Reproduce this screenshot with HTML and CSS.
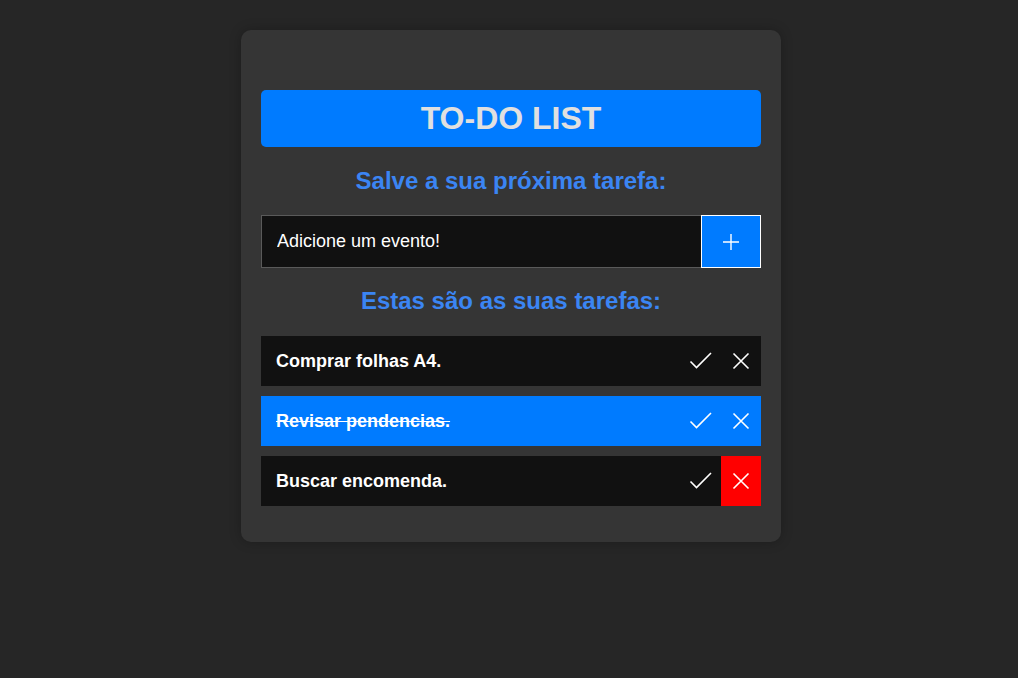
FILE: index.html
```html
<!DOCTYPE html>
<html lang="pt">
<head>
<meta charset="utf-8">
<title>To-Do List</title>
<link rel="stylesheet" href="styles.css">
</head>
<body>
<main class="card">
  <h1 class="title">TO-DO LIST</h1>
  <h2 class="subtitle">Salve a sua próxima tarefa:</h2>
  <form class="add-row">
    <input class="add-input" type="text" value="Adicione um evento!">
    <button class="add-btn" type="button" aria-label="Adicionar">
      <svg width="18" height="18" viewBox="0 0 18 18"><path d="M9 1V17M1 9H17" stroke="#fff" stroke-width="1.4" fill="none"/></svg>
    </button>
  </form>
  <h2 class="subtitle subtitle-list">Estas são as suas tarefas:</h2>
  <ul class="tasks">
    <li class="task">
      <span class="task-text">Comprar folhas A4.</span>
      <button class="icon-btn" type="button" aria-label="Concluir"><svg width="24" height="18" viewBox="0 0 24 18"><path d="M1.5 9.5L7.5 15.5L22 1" stroke="#fff" stroke-width="1.6" fill="none"/></svg></button>
      <button class="icon-btn" type="button" aria-label="Remover"><svg width="18" height="18" viewBox="0 0 18 18"><path d="M1.5 1.5L16.5 16.5M16.5 1.5L1.5 16.5" stroke="#fff" stroke-width="1.6" fill="none"/></svg></button>
    </li>
    <li class="task task-done">
      <span class="task-text">Revisar pendencias.</span>
      <button class="icon-btn" type="button" aria-label="Concluir"><svg width="24" height="18" viewBox="0 0 24 18"><path d="M1.5 9.5L7.5 15.5L22 1" stroke="#fff" stroke-width="1.6" fill="none"/></svg></button>
      <button class="icon-btn" type="button" aria-label="Remover"><svg width="18" height="18" viewBox="0 0 18 18"><path d="M1.5 1.5L16.5 16.5M16.5 1.5L1.5 16.5" stroke="#fff" stroke-width="1.6" fill="none"/></svg></button>
    </li>
    <li class="task">
      <span class="task-text">Buscar encomenda.</span>
      <button class="icon-btn" type="button" aria-label="Concluir"><svg width="24" height="18" viewBox="0 0 24 18"><path d="M1.5 9.5L7.5 15.5L22 1" stroke="#fff" stroke-width="1.6" fill="none"/></svg></button>
      <button class="icon-btn icon-btn-danger" type="button" aria-label="Remover"><svg width="18" height="18" viewBox="0 0 18 18"><path d="M1.5 1.5L16.5 16.5M16.5 1.5L1.5 16.5" stroke="#fff" stroke-width="1.6" fill="none"/></svg></button>
    </li>
  </ul>
</main>
</body>
</html>
```

FILE: styles.css
```css
* { box-sizing: border-box; }

body {
  margin: 0;
  min-height: 100vh;
  background: #262626;
  font-family: "Liberation Sans", Arial, sans-serif;
  display: flex;
  justify-content: center;
  align-items: flex-start;
  padding: 30px 0 0 4px;
}

.card {
  width: 540px;
  background: #353535;
  border-radius: 10px;
  padding: 60px 20px 36px;
  box-shadow: 0 0 12px rgba(0, 0, 0, 0.25);
}

.title {
  margin: 0;
  height: 57px;
  line-height: 57px;
  background: #007bff;
  border-radius: 5px;
  color: #e0e0e0;
  text-align: center;
  font-size: 32px;
  font-weight: bold;
}

.subtitle {
  margin: 20px 0;
  line-height: 28px;
  font-size: 24px;
  font-weight: bold;
  color: #3b85f3;
  text-align: center;
}

.subtitle-list {
  margin: 19px 0 21px;
}

.add-row {
  display: flex;
  height: 53px;
  margin: 0;
}

.add-input {
  flex: 1;
  min-width: 0;
  height: 100%;
  background: #111;
  border: 1px solid #5a5a5a;
  border-right: none;
  color: #fff;
  font-family: "Liberation Sans", Arial, sans-serif;
  font-size: 18px;
  padding: 0 15px;
  outline: none;
}

.add-btn {
  width: 60px;
  height: 100%;
  background: #007bff;
  border: 1px solid #fff;
  display: flex;
  align-items: center;
  justify-content: center;
  padding: 0;
}

.tasks {
  list-style: none;
  margin: 0;
  padding: 0;
  display: flex;
  flex-direction: column;
  gap: 10px;
}

.task {
  display: flex;
  align-items: stretch;
  height: 50px;
  background: #111;
}

.task-done {
  background: #007bff;
}

.task-text {
  flex: 1;
  display: flex;
  align-items: center;
  padding-left: 15px;
  color: #fff;
  font-size: 18px;
  font-weight: bold;
}

.task-done .task-text {
  text-decoration: line-through;
}

.icon-btn {
  width: 40px;
  background: transparent;
  border: none;
  padding: 0;
  display: flex;
  align-items: center;
  justify-content: center;
}

.icon-btn-danger {
  background: #ff0000;
}
```
